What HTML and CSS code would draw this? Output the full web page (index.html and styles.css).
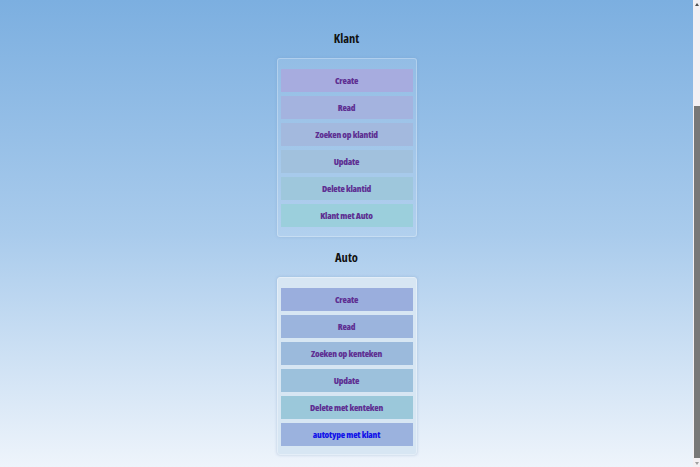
FILE: index.html
```html
<!DOCTYPE html>
<html lang="nl">
<head>
<meta charset="utf-8">
<title>Klant en Auto</title>
<link rel="stylesheet" href="styles.css">
</head>
<body>
<main class="page">
  <section class="group group-klant">
    <h2 class="group-title">Klant</h2>
    <nav class="panel">
      <a class="btn visited" href="#create">Create</a>
      <a class="btn visited" href="#read">Read</a>
      <a class="btn visited" href="#zoeken">Zoeken op klantid</a>
      <a class="btn visited" href="#update">Update</a>
      <a class="btn visited" href="#delete">Delete klantid</a>
      <a class="btn visited" href="#klantauto">Klant met Auto</a>
    </nav>
  </section>
  <section class="group group-auto">
    <h2 class="group-title">Auto</h2>
    <nav class="panel">
      <a class="btn visited" href="#acreate">Create</a>
      <a class="btn visited" href="#aread">Read</a>
      <a class="btn visited" href="#azoeken">Zoeken op kenteken</a>
      <a class="btn visited" href="#aupdate">Update</a>
      <a class="btn visited" href="#adelete">Delete met kenteken</a>
      <a class="btn fresh" href="#autotype">autotype met klant</a>
    </nav>
  </section>
</main>
<div class="scrollbar" aria-hidden="true">
  <span class="sb-arrow sb-up"></span>
  <span class="sb-track"><span class="sb-thumb"></span></span>
  <span class="sb-arrow sb-down"></span>
</div>
</body>
</html>
```
FILE: styles.css
```css
html {
  background: linear-gradient(to bottom, #7cafe0 0%, #a9cbec 50%, #eef4fb 100%) fixed;
  min-height: 100%;
}
body {
  margin: 0;
  font-family: "Open Sans", "DejaVu Sans Condensed", sans-serif;
  font-stretch: 75%;
}

.page {
  display: flex;
  flex-direction: column;
  align-items: center;
  padding: 16px 7px 12px 0;
}
.group {
  display: flex;
  flex-direction: column;
  align-items: center;
}
.group-title {
  margin: 16px 0 12px;
  font-size: 12.5px;
  line-height: 14px;
  font-weight: 700;
  color: #111;
}
.group-auto .group-title { margin-top: 14px; margin-bottom: 12px; }
.panel {
  width: 132px;
  padding: 10px 3px 9px;
  border: 1px solid rgba(255,255,255,0.28);
  border-radius: 3px;
  display: flex;
  flex-direction: column;
  gap: 4px;
  box-shadow: 0 0 3px rgba(90,130,180,0.25);
}
.group-klant .panel { background: rgba(255,255,255,0.1); }
.group-auto .panel {
  padding-bottom: 8px;
  background: #d7e6f3;
  border-color: #e4eef8;
  box-shadow: 0 0 3px rgba(120,150,190,0.45);
}
.btn {
  display: block;
  height: 23px;
  line-height: 23px;
  text-align: center;
  font-size: 9px;
  letter-spacing: -0.2px;
  font-weight: 800;
  text-decoration: none;
}
.btn.visited { color: #5e2f92; }
.btn.fresh { color: #1212e8; }

.group-klant .btn:nth-child(1) { background: #a7acdf; }
.group-klant .btn:nth-child(2) { background: #a4b3df; }
.group-klant .btn:nth-child(3) { background: #a3b9de; }
.group-klant .btn:nth-child(4) { background: #a1c1dd; }
.group-klant .btn:nth-child(5) { background: #9ec7dc; }
.group-klant .btn:nth-child(6) { background: #9bcfdc; }

.group-auto .btn:nth-child(1) { background: #9aaedd; }
.group-auto .btn:nth-child(2) { background: #9bb4dd; }
.group-auto .btn:nth-child(3) { background: #9bbadc; }
.group-auto .btn:nth-child(4) { background: #9cc1dc; }
.group-auto .btn:nth-child(5) { background: #9bc8da; }
.group-auto .btn:nth-child(6) { background: #9bb2de; }

/* browser scrollbar, drawn over the right edge */
.scrollbar {
  position: fixed;
  top: 0;
  right: 0;
  bottom: 0;
  width: 7px;
  background: #f4f0f3;
  display: flex;
  flex-direction: column;
}
.sb-arrow {
  height: 8px;
  display: flex;
  align-items: center;
  justify-content: center;
}
.sb-arrow::before {
  content: "";
  border-left: 2px solid transparent;
  border-right: 2px solid transparent;
}
.sb-up::before { border-bottom: 3px solid #505050; }
.sb-down::before { border-top: 3px solid #a0a0a0; }
.sb-track {
  flex: 1;
  display: flex;
  flex-direction: column;
  padding: 98px 0 1px;
}
.sb-thumb {
  flex: 1;
  margin-left: 1px;
  background: #787878;
}
```
